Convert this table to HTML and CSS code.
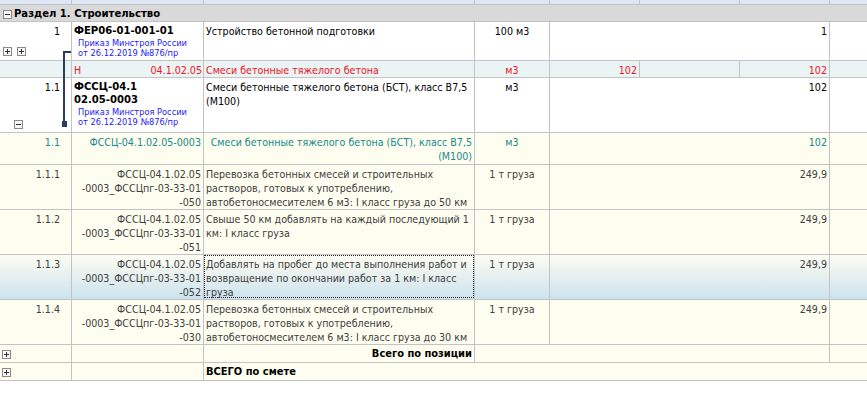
FILE: index.html
```html
<!DOCTYPE html>
<html lang="ru">
<head>
<meta charset="utf-8">
<title>Смета</title>
<link rel="stylesheet" href="styles.css">
</head>
<body>
<div class="grid">
<table class="t">
<colgroup><col class="c1"><col class="c2"><col class="c3"><col class="c4"><col class="c5"><col class="c6"><col class="c7"><col class="c8"></colgroup>
<tbody>
<tr class="hdr"><td></td><td></td><td></td><td></td><td></td><td></td><td></td><td></td></tr>
<tr class="sec">
  <td colspan="8"><div class="sec-in"><svg class="ico" width="9" height="9" viewBox="0 0 9 9"><rect x=".5" y=".5" width="8" height="8" fill="#f6f6f6" stroke="#8a8a8a"/><path d="M2 4.5H7" stroke="#333"/></svg><span>Раздел 1. Строительство</span></div></td>
</tr>
<tr class="pos h39">
  <td><div class="numcell in38"><span class="num">1</span><span class="icons"><svg class="ico" width="9" height="9" viewBox="0 0 9 9"><rect x=".5" y=".5" width="8" height="8" fill="#f6f6f6" stroke="#8a8a8a"/><path d="M2 4.5H7M4.5 2V7" stroke="#333"/></svg><svg class="ico" width="9" height="9" viewBox="0 0 9 9"><rect x=".5" y=".5" width="8" height="8" fill="#f6f6f6" stroke="#8a8a8a"/><path d="M2 4.5H7M4.5 2V7" stroke="#333"/></svg></span></div></td>
  <td><div class="code"><div class="code-b">ФЕР06-01-001-01</div><div class="order">Приказ Минстроя России<br>от 26.12.2019 №876/пр</div></div></td>
  <td><div class="txt">Устройство бетонной подготовки</div></td>
  <td><div class="txt ctr">100 м3</div></td>
  <td colspan="3"><div class="txt rt">1</div></td>
  <td></td>
</tr>
<tr class="res h17">
  <td></td>
  <td><div class="txt split red"><span>Н</span><span>04.1.02.05</span></div></td>
  <td><div class="txt red">Смеси бетонные тяжелого бетона</div></td>
  <td><div class="txt ctr red">м3</div></td>
  <td><div class="txt rt red">102</div></td>
  <td></td>
  <td><div class="txt rt red">102</div></td>
  <td></td>
</tr>
<tr class="pos h55">
  <td><div class="numcell in54"><span class="num">1.1</span><span class="icons icons-min"><svg class="ico" width="9" height="9" viewBox="0 0 9 9"><rect x=".5" y=".5" width="8" height="8" fill="#f6f6f6" stroke="#8a8a8a"/><path d="M2 4.5H7" stroke="#333"/></svg></span></div></td>
  <td><div class="code"><div class="code-b">ФССЦ-04.1<br>02.05-0003</div><div class="order">Приказ Минстроя России<br>от 26.12.2019 №876/пр</div></div></td>
  <td><div class="txt">Смеси бетонные тяжелого бетона (БСТ), класс В7,5<br>(М100)</div></td>
  <td><div class="txt ctr">м3</div></td>
  <td colspan="3"><div class="txt rt">102</div></td>
  <td></td>
</tr>
<tr class="mat h32">
  <td><div class="txt num-r teal">1.1</div></td>
  <td><div class="txt rt teal">ФССЦ-04.1.02.05-0003</div></td>
  <td><div class="txt rt teal">Смеси бетонные тяжелого бетона (БСТ), класс В7,5<br>(М100)</div></td>
  <td><div class="txt ctr teal">м3</div></td>
  <td colspan="3"><div class="txt rt teal">102</div></td>
  <td></td>
</tr>
<tr class="sub h44">
  <td><div class="txt num-r">1.1.1</div></td>
  <td><div class="txt rt">ФССЦ-04.1.02.05<br>-0003_ФССЦпг-03-33-01<br>-050</div></td>
  <td><div class="txt">Перевозка бетонных смесей и строительных<br>растворов, готовых к употреблению,<br>автобетоносмесителем 6 м3: I класс груза до 50 км</div></td>
  <td><div class="txt ctr">1 т груза</div></td>
  <td colspan="3"><div class="txt rt">249,9</div></td>
  <td></td>
</tr>
<tr class="sub h44">
  <td><div class="txt num-r">1.1.2</div></td>
  <td><div class="txt rt">ФССЦ-04.1.02.05<br>-0003_ФССЦпг-03-33-01<br>-051</div></td>
  <td><div class="txt">Свыше 50 км добавлять на каждый последующий 1<br>км: I класс груза</div></td>
  <td><div class="txt ctr">1 т груза</div></td>
  <td colspan="3"><div class="txt rt">249,9</div></td>
  <td></td>
</tr>
<tr class="sub sel h44">
  <td><div class="txt num-r">1.1.3</div></td>
  <td><div class="txt rt">ФССЦ-04.1.02.05<br>-0003_ФССЦпг-03-33-01<br>-052</div></td>
  <td class="focus"><div class="txt">Добавлять на пробег до места выполнения работ и<br>возвращение по окончании работ за 1 км: I класс<br>груза</div></td>
  <td><div class="txt ctr">1 т груза</div></td>
  <td colspan="3"><div class="txt rt">249,9</div></td>
  <td></td>
</tr>
<tr class="sub h44">
  <td><div class="txt num-r">1.1.4</div></td>
  <td><div class="txt rt">ФССЦ-04.1.02.05<br>-0003_ФССЦпг-03-33-01<br>-030</div></td>
  <td><div class="txt">Перевозка бетонных смесей и строительных<br>растворов, готовых к употреблению,<br>автобетоносмесителем 6 м3: I класс груза до 30 км</div></td>
  <td><div class="txt ctr">1 т груза</div></td>
  <td colspan="3"><div class="txt rt">249,9</div></td>
  <td></td>
</tr>
<tr class="tot h18">
  <td><div class="tot-ico"><svg class="ico" width="9" height="9" viewBox="0 0 9 9"><rect x=".5" y=".5" width="8" height="8" fill="#f6f6f6" stroke="#8a8a8a"/><path d="M2 4.5H7M4.5 2V7" stroke="#333"/></svg></div></td>
  <td></td>
  <td><div class="txt rt bold">Всего по позиции</div></td>
  <td colspan="4"></td>
  <td></td>
</tr>
<tr class="tot h18">
  <td><div class="tot-ico"><svg class="ico" width="9" height="9" viewBox="0 0 9 9"><rect x=".5" y=".5" width="8" height="8" fill="#f6f6f6" stroke="#8a8a8a"/><path d="M2 4.5H7M4.5 2V7" stroke="#333"/></svg></div></td>
  <td></td>
  <td colspan="6" class="noright"><div class="txt bold">ВСЕГО по смете</div></td>
</tr>
</tbody>
</table>
<div class="link">
  <span class="link-tick"></span>
  <span class="link-line"></span>
  <span class="link-end"></span>
</div>
</div>
</body>
</html>
```

FILE: styles.css
```css
html, body {
  margin: 0;
  padding: 0;
  background: #ffffff;
  overflow: hidden;
}

.grid {
  position: relative;
  width: 867px;
  height: 399px;
  overflow: hidden;
  font-family: "DejaVu Sans Condensed", "DejaVu Sans", sans-serif;
  font-size: 10.6px;
  color: #000;
}

.t {
  border-collapse: separate;
  border-spacing: 0;
  table-layout: fixed;
  width: 890px;
}

.c1 { width: 72px; }
.c2 { width: 132px; }
.c3 { width: 271px; }
.c4 { width: 75px; }
.c5 { width: 90px; }
.c6 { width: 100px; }
.c7 { width: 90px; }
.c8 { width: 60px; }

.t td {
  box-sizing: border-box;
  padding: 0;
  vertical-align: top;
  border-right: 1px solid #c3c3c3;
  border-bottom: 1px solid #c3c3c3;
  overflow: hidden;
  white-space: nowrap;
}

.hdr td {
  height: 5px;
  background: #dce6f4;
}

.sec td {
  height: 17px;
  background: #d9d9d9;
  border-right: 0;
}

.sec-in {
  display: flex;
  align-items: center;
  gap: 2px;
  padding: 2px 0 0 3px;
  font-weight: bold;
  font-size: 11.2px;
  line-height: 14px;
}

.ico { display: block; }

.h17 td { height: 17px; }
.h18 td { height: 18px; }
.h32 td { height: 32px; }
.h39 td { height: 39px; }
.h44 td { height: 44px; }
.h55 td { height: 55px; }

.pos td { background: #ffffff; }
.res td { background: #ebf4f5; }
.mat td, .sub td, .tot td { background: #fefef0; }
.sel td {
  background: linear-gradient(to bottom, #fcfdf3 0%, #e8f1ef 45%, #cbe3ef 100%);
}

.sub td { color: #404040; }

.txt {
  padding: 2px 2px 0 2px;
  line-height: 14px;
}

.numcell {
  display: flex;
  flex-direction: column;
  justify-content: space-between;
  align-items: stretch;
}
.in38 { height: 38px; }
.in54 { height: 54px; }

.num {
  display: block;
  text-align: right;
  padding: 2px 11px 0 0;
  line-height: 14px;
}
.num-r {
  text-align: right;
  padding-right: 11px;
}

.icons {
  display: flex;
  gap: 5px;
  padding: 0 0 4px 3px;
}
.icons-min {
  padding: 0 0 3px 14px;
}

.tot-ico {
  padding: 5px 0 0 2px;
}

.code {
  padding: 2px 0 0 2px;
}
.code-b {
  font-weight: bold;
  font-size: 11.2px;
  line-height: 13px;
}
.order {
  margin-top: 1px;
  padding-left: 4px;
  color: #2323f5;
  font-size: 9.2px;
  line-height: 10px;
}

.ctr { text-align: center; }
.rt { text-align: right; }
.bold { font-weight: bold; font-size: 11px; }

.split {
  display: flex;
  justify-content: space-between;
  padding-right: 1px;
}

.red { color: #ef1325; }
.teal { color: #18898c; }

.focus .txt {
  outline: 1px dotted #222;
  outline-offset: -1px;
  height: 43px;
  box-sizing: border-box;
}

.noright { border-right: 0 !important; }

.link { position: absolute; left: 0; top: 0; }
.link-tick {
  position: absolute;
  left: 63px;
  top: 51px;
  width: 8px;
  height: 2px;
  background: #2c3d62;
}
.link-line {
  position: absolute;
  left: 63px;
  top: 51px;
  width: 2px;
  height: 72px;
  background: #2c3d62;
}
.link-end {
  position: absolute;
  left: 62px;
  top: 121px;
  width: 5px;
  height: 6px;
  background: #2c3d62;
}
```
